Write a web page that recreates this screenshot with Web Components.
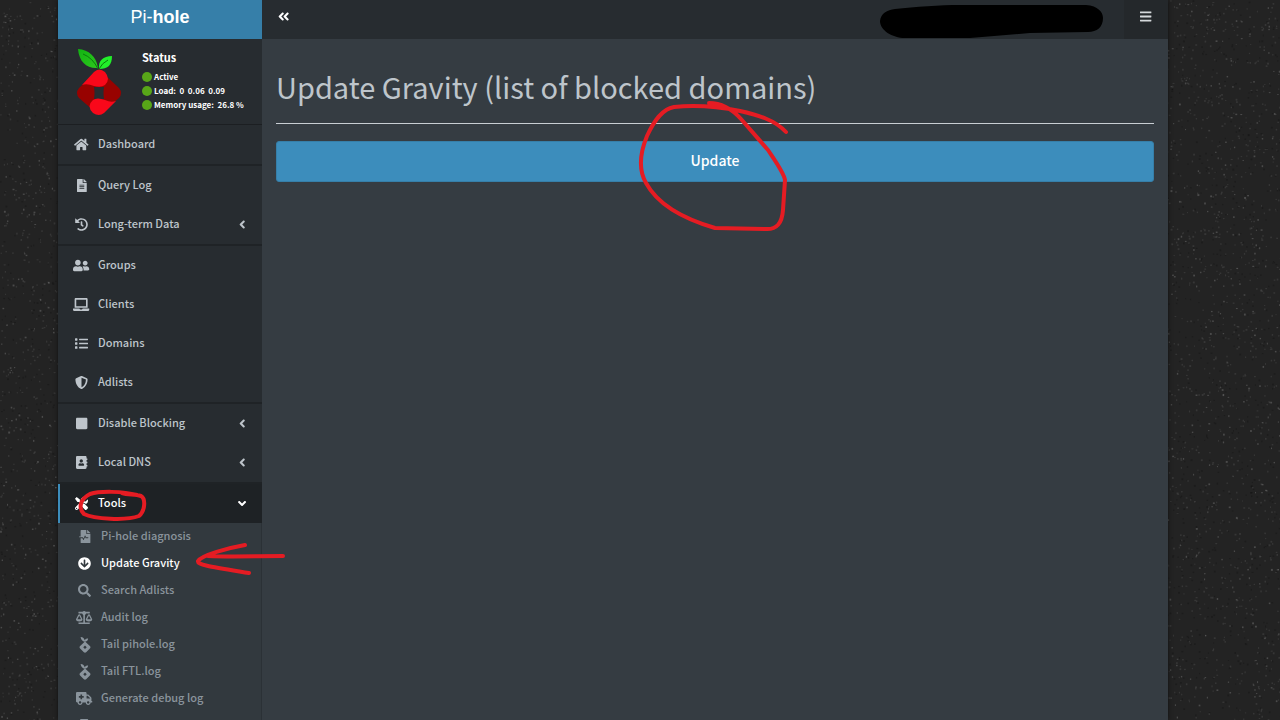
<!DOCTYPE html>
<html lang="en">
<head>
<meta charset="utf-8">
<title>Pi-hole - Update Gravity</title>
<style>
html { height: 100%; background: #232323; }
body { margin: 0; height: 100%; overflow: hidden; color: #bec5cb; font: 11px/20px "Noto Sans CJK SC", "Noto Sans", sans-serif; }
</style>
</head>
<body>
<pihole-app></pihole-app>
<script>
const ICONS = {
  home: [576, 'M280.37 148.26L96 300.11V464a16 16 0 0 0 16 16l112.06-.29a16 16 0 0 0 15.92-16V368a16 16 0 0 1 16-16h64a16 16 0 0 1 16 16v95.64a16 16 0 0 0 16 16.05L464 480a16 16 0 0 0 16-16V300L295.67 148.26a12.19 12.19 0 0 0-15.3 0zM571.6 251.47L488 182.56V44.05a12 12 0 0 0-12-12h-56a12 12 0 0 0-12 12v72.61L318.47 43a48 48 0 0 0-61 0L4.34 251.47a12 12 0 0 0-1.6 16.9l25.5 31A12 12 0 0 0 45.15 301l235.22-193.74a12.19 12.19 0 0 1 15.3 0L530.9 301a12 12 0 0 0 16.9-1.6l25.5-31a12 12 0 0 0-1.7-16.93z'],
  file: [384, 'M224 136V0H24C10.7 0 0 10.7 0 24v464c0 13.3 10.7 24 24 24h336c13.3 0 24-10.7 24-24V160H248c-13.2 0-24-10.8-24-24zm64 236c0 6.6-5.4 12-12 12H108c-6.6 0-12-5.4-12-12v-8c0-6.6 5.4-12 12-12h168c6.6 0 12 5.4 12 12v8zm0-64c0 6.6-5.4 12-12 12H108c-6.6 0-12-5.4-12-12v-8c0-6.6 5.4-12 12-12h168c6.6 0 12 5.4 12 12v8zm0-72v8c0 6.6-5.4 12-12 12H108c-6.6 0-12-5.4-12-12v-8c0-6.6 5.4-12 12-12h168c6.6 0 12 5.4 12 12zm96-114.1v6.1H256V0h6.1c6.4 0 12.5 2.5 17 7l97.9 98c4.5 4.5 7 10.6 7 16.9z'],
  history: [512, 'M504 255.531c.253 136.64-111.18 248.372-247.82 248.468-59.015.042-113.223-20.53-155.822-54.911-11.077-8.94-11.905-25.541-1.839-35.607l11.267-11.267c8.609-8.609 22.353-9.551 31.891-1.984C173.062 425.135 212.781 440 256 440c101.705 0 184-82.311 184-184 0-101.705-82.311-184-184-184-48.814 0-93.149 18.969-126.068 49.932l50.754 50.754c10.08 10.08 2.941 27.314-11.313 27.314H24c-8.837 0-16-7.163-16-16V38.627c0-14.254 17.234-21.393 27.314-11.314l49.372 49.372C129.209 34.136 189.552 8 256 8c136.81 0 247.747 110.78 248 247.531zm-180.912 78.784l9.823-12.63c8.138-10.463 6.253-25.542-4.21-33.679L288 256.349V152c0-13.255-10.745-24-24-24h-16c-13.255 0-24 10.745-24 24v135.651l65.409 50.874c10.463 8.137 25.541 6.253 33.679-4.21z'],
  friends: [640, 'M192 256c61.9 0 112-50.1 112-112S253.9 32 192 32 80 82.1 80 144s50.1 112 112 112zm76.8 32h-8.3c-20.8 10-43.9 16-68.5 16s-47.6-6-68.5-16h-8.3C51.6 288 0 339.6 0 403.2V432c0 26.5 21.5 48 48 48h288c26.5 0 48-21.5 48-48v-28.8c0-63.6-51.6-115.2-115.2-115.2zM480 256c53 0 96-43 96-96s-43-96-96-96-96 43-96 96 43 96 96 96zm48 32h-3.8c-13.9 4.8-28.6 8-44.2 8s-30.3-3.2-44.2-8H432c-20.4 0-39.2 5.9-55.7 15.4 24.4 26.3 39.7 61.2 39.7 99.8v38.4c0 2.2-.5 4.3-.6 6.4H592c26.5 0 48-21.5 48-48 0-61.9-50.1-112-112-112z'],
  laptop: [640, 'M624 416H381.54c-.74 19.81-14.71 32-32.74 32H288c-18.69 0-33.02-17.47-32.77-32H16c-8.8 0-16 7.2-16 16v16c0 35.2 28.8 64 64 64h512c35.2 0 64-28.8 64-64v-16c0-8.8-7.2-16-16-16zM576 48c0-26.4-21.6-48-48-48H112C85.6 0 64 21.6 64 48v336h512V48zm-64 272H128V64h384v256z'],
  list: [512, 'M80 368H16a16 16 0 0 0-16 16v64a16 16 0 0 0 16 16h64a16 16 0 0 0 16-16v-64a16 16 0 0 0-16-16zm0-320H16A16 16 0 0 0 0 64v64a16 16 0 0 0 16 16h64a16 16 0 0 0 16-16V64a16 16 0 0 0-16-16zm0 160H16a16 16 0 0 0-16 16v64a16 16 0 0 0 16 16h64a16 16 0 0 0 16-16v-64a16 16 0 0 0-16-16zm416 176H176a16 16 0 0 0-16 16v32a16 16 0 0 0 16 16h320a16 16 0 0 0 16-16v-32a16 16 0 0 0-16-16zm0-320H176a16 16 0 0 0-16 16v32a16 16 0 0 0 16 16h320a16 16 0 0 0 16-16V80a16 16 0 0 0-16-16zm0 160H176a16 16 0 0 0-16 16v32a16 16 0 0 0 16 16h320a16 16 0 0 0 16-16v-32a16 16 0 0 0-16-16z'],
  shield: [512, 'M466.5 83.7l-192-80a48.15 48.15 0 0 0-36.9 0l-192 80C27.7 91.1 16 108.6 16 128c0 198.5 114.5 335.7 221.5 380.3 11.8 4.9 25.1 4.9 36.9 0C360.1 472.6 496 349.3 496 128c0-19.4-11.7-36.9-29.5-44.3zM256.1 446.3l-.1-381 175.9 73.3c-3.3 151.4-82.1 261.1-175.8 307.7z'],
  stop: [448, 'M400 32H48C21.5 32 0 53.5 0 80v352c0 26.5 21.5 48 48 48h352c26.5 0 48-21.5 48-48V80c0-26.5-21.5-48-48-48z'],
  book: [448, 'M436 160c6.6 0 12-5.4 12-12v-40c0-6.6-5.4-12-12-12h-20V48c0-26.5-21.5-48-48-48H48C21.5 0 0 21.5 0 48v416c0 26.5 21.5 48 48 48h320c26.5 0 48-21.5 48-48v-48h20c6.6 0 12-5.4 12-12v-40c0-6.6-5.4-12-12-12h-20v-64h20c6.6 0 12-5.4 12-12v-40c0-6.6-5.4-12-12-12h-20v-64h20zm-228-32c35.3 0 64 28.7 64 64s-28.7 64-64 64-64-28.7-64-64 28.7-64 64-64zm112 236.8c0 10.6-10 19.2-22.4 19.2H118.4C106 384 96 375.4 96 364.8v-19.2c0-31.8 30.1-57.6 67.2-57.6h5c12.3 5.1 25.7 8 39.8 8s27.6-2.9 39.8-8h5c37.1 0 67.2 25.8 67.2 57.6v19.2z'],
  tools: [512, 'M501.1 395.7L384 278.6c-23.1-23.1-57.6-27.6-85.4-13.9L192 158.1V96L64 0 0 64l96 128h62.1l106.6 106.6c-13.6 27.8-9.2 62.3 13.9 85.4l117.1 117.1c14.6 14.6 38.2 14.6 52.7 0l52.7-52.7c14.5-14.6 14.5-38.2 0-52.7zM331.7 225c28.3 0 54.9 11 74.9 31l19.4 19.4c15.8-6.9 30.8-16.5 43.8-29.5 37.1-37.1 49.7-89.3 37.9-136.7-2.2-9-13.5-12.1-20.1-5.5l-74.4 74.4-67.9-11.3L334 98.9l74.4-74.4c6.6-6.6 3.4-17.9-5.7-20.2-47.4-11.7-99.6.9-136.6 37.9-28.5 28.5-41.9 66.1-41.2 103.6l82.1 82.1c8.1-1.9 16.5-2.9 24.7-2.9zm-103.9 82l-56.7-56.7L18.7 402.8c-25 25-25 65.5 0 90.5s65.5 25 90.5 0l123.6-123.6c-7.6-19.9-9.9-41.6-5-62.7zM64 472c-13.2 0-24-10.8-24-24 0-13.3 10.7-24 24-24s24 10.7 24 24c0 13.2-10.7 24-24 24z'],
  medical: [448, 'M288 136V0H88C74.7 0 64 10.7 64 24v232H8c-4.4 0-8 3.6-8 8v16c0 4.4 3.6 8 8 8h140.9c3 0 5.8 1.7 7.2 4.4l19.9 39.8 56.8-113.7c2.9-5.9 11.4-5.9 14.3 0l34.7 69.5H352c8.8 0 16 7.2 16 16s-7.2 16-16 16h-89.9L240 275.8l-56.8 113.7c-2.9 5.9-11.4 5.9-14.3 0L134.1 320H64v168c0 13.3 10.7 24 24 24h336c13.3 0 24-10.7 24-24V160H312c-13.2 0-24-10.8-24-24zm153-31L343.1 7c-4.5-4.5-10.6-7-17-7H320v128h128v-6.1c0-6.3-2.5-12.4-7-16.9z'],
  down: [512, 'M504 256c0 137-111 248-248 248S8 393 8 256 119 8 256 8s248 111 248 248zm-143.6-28.9L288 302.6V120c0-13.3-10.7-24-24-24h-16c-13.3 0-24 10.7-24 24v182.6l-72.4-75.5c-9.3-9.7-24.8-9.9-34.3-.4l-10.9 11c-9.4 9.4-9.4 24.6 0 33.9L239 404.3c9.4 9.4 24.6 9.4 33.9 0l132.7-132.7c9.4-9.4 9.4-24.6 0-33.9l-10.9-11c-9.5-9.5-25-9.3-34.3.4z'],
  search: [512, 'M505 442.7L405.3 343c-4.5-4.5-10.6-7-17-7H372c27.6-35.3 44-79.7 44-128C416 93.1 322.9 0 208 0S0 93.1 0 208s93.1 208 208 208c48.3 0 92.7-16.4 128-44v16.3c0 6.4 2.5 12.5 7 17l99.7 99.7c9.4 9.4 24.6 9.4 33.9 0l28.3-28.3c9.4-9.4 9.4-24.6.1-34zM208 336c-70.7 0-128-57.2-128-128 0-70.7 57.2-128 128-128 70.7 0 128 57.2 128 128 0 70.7-57.2 128-128 128z'],
  scale: [640, 'M256 336h-.02c0-16.18 1.34-8.73-85.05-181.51-17.65-35.29-68.19-35.36-85.87 0C-2.06 328.75.02 320.33.02 336H0c0 44.18 57.31 80 128 80s128-35.82 128-80zM128 176l72 144H56l72-144zm511.98 160c0-16.18 1.34-8.73-85.05-181.51-17.65-35.29-68.19-35.36-85.87 0-87.12 174.26-85.04 165.84-85.04 181.51H384c0 44.18 57.31 80 128 80s128-35.82 128-80h-.02zM440 320l72-144 72 144H440zm88 128H352V153.25c23.51-10.29 41.16-31.48 46.39-57.25H528c8.84 0 16-7.16 16-16V48c0-8.84-7.16-16-16-16H383.64C369.04 12.68 346.09 0 320 0s-49.04 12.68-63.64 32H112c-8.84 0-16 7.16-16 16v32c0 8.84 7.16 16 16 16h129.61c5.23 25.76 22.87 46.96 46.39 57.25V448H112c-8.84 0-16 7.16-16 16v32c0 8.84 7.16 16 16 16h416c8.84 0 16-7.16 16-16v-32c0-8.84-7.16-16-16-16z'],
  pihole: [384, 'M176 150C116 146 66 90 50 0c80 4 124 56 132 104C200 70 236 50 292 50c-4 56-40 96-88 100zM228 172l120 116c24 24 24 56 0 80L228 490c-20 20-52 20-72 0L36 368c-24-24-24-56 0-80l120-116c20-18 52-18 72 0zM192 272L136 328 192 384 248 328z'],
  ambulance: [640, 'M624 352h-16V243.9c0-12.7-5.1-24.9-14.1-33.9L494 110.1c-9-9-21.2-14.1-33.9-14.1H416V48c0-26.5-21.5-48-48-48H48C21.5 0 0 21.5 0 48v320c0 26.5 21.5 48 48 48h16c0 53 43 96 96 96s96-43 96-96h128c0 53 43 96 96 96s96-43 96-96h48c8.8 0 16-7.2 16-16v-32c0-8.8-7.2-16-16-16zM160 464c-26.5 0-48-21.5-48-48s21.5-48 48-48 48 21.5 48 48-21.5 48-48 48zm144-248c0 4.4-3.6 8-8 8h-56v56c0 4.4-3.6 8-8 8h-48c-4.4 0-8-3.6-8-8v-56h-56c-4.4 0-8-3.6-8-8v-48c0-4.4 3.6-8 8-8h56v-56c0-4.4 3.6-8 8-8h48c4.4 0 8 3.6 8 8v56h56c4.4 0 8 3.6 8 8v48zm176 248c-26.5 0-48-21.5-48-48s21.5-48 48-48 48 21.5 48 48-21.5 48-48 48zm80-208H416V144h44.1l99.9 99.9V256z'],
  network: [640, 'M192 0h256c18 0 32 14 32 32v128c0 18-14 32-32 32h-96v40h288v48H544v40h64c18 0 32 14 32 32v128c0 18-14 32-32 32H416c-18 0-32-14-32-32V352c0-18 14-32 32-32h64v-40H160v40h64c18 0 32 14 32 32v128c0 18-14 32-32 32H32c-18 0-32-14-32-32V352c0-18 14-32 32-32h64v-40H0v-48h288v-40h-96c-18 0-32-14-32-32V32c0-18 14-32 32-32z'],
  left: [256, 'M31.7 239l136-136c9.4-9.4 24.6-9.4 33.9 0l22.6 22.6c9.4 9.4 9.4 24.6 0 33.9L127.9 256l96.4 96.4c9.4 9.4 9.4 24.6 0 33.9L201.7 409c-9.4 9.4-24.6 9.4-33.9 0l-136-136c-9.5-9.4-9.5-24.6-.1-34z'],
  open: [320, 'M143 352.3L7 216.3c-9.4-9.4-9.4-24.6 0-33.9l22.6-22.6c9.4-9.4 24.6-9.4 33.9 0l96.4 96.4 96.4-96.4c9.4-9.4 24.6-9.4 33.9 0l22.6 22.6c9.4 9.4 9.4 24.6 0 33.9l-136 136c-9.2 9.4-24.4 9.4-33.8 0z'],
  collapse: [448, 'M223.7 239l136-136c9.4-9.4 24.6-9.4 33.9 0l22.6 22.6c9.4 9.4 9.4 24.6 0 33.9L319.9 256l96.4 96.4c9.4 9.4 9.4 24.6 0 33.9L393.7 409c-9.4 9.4-24.6 9.4-33.9 0l-136-136c-9.5-9.4-9.5-24.6-.1-34zm-192 34l136 136c9.4 9.4 24.6 9.4 33.9 0l22.6-22.6c9.4-9.4 9.4-24.6 0-33.9L127.9 256l96.4-96.4c9.4-9.4 9.4-24.6 0-33.9L201.7 103c-9.4-9.4-24.6-9.4-33.9 0l-136 136c-9.5 9.4-9.5 24.6-.1 34z'],
  bars: [448, 'M16 132h416c8.8 0 16-7.2 16-16V76c0-8.8-7.2-16-16-16H16C7.2 60 0 67.2 0 76v40c0 8.8 7.2 16 16 16zm0 160h416c8.8 0 16-7.2 16-16v-40c0-8.8-7.2-16-16-16H16c-8.8 0-16 7.2-16 16v40c0 8.8 7.2 16 16 16zm0 160h416c8.8 0 16-7.2 16-16v-40c0-8.8-7.2-16-16-16H16c-8.8 0-16 7.2-16 16v40c0 8.8 7.2 16 16 16z']
};

class View extends HTMLElement {
  connectedCallback() {
    if (this.shadowRoot) return;
    this.attachShadow({ mode: 'open' }).innerHTML = this.view();
    this.ready();
  }
  ready() {}
}

customElements.define('ph-icon', class extends View {
  view() {
    const [w, d] = ICONS[this.getAttribute('name')];
    return `<style>:host{display:block;height:13px;flex:none}:host([name=pihole]){height:16px}svg{display:block;height:100%;margin:auto;fill:currentColor;overflow:visible}</style>
    <svg viewBox="0 0 ${w} 512" aria-hidden="true"><path fill-rule="evenodd" d="${d}"/></svg>`;
  }
});

customElements.define('ph-backdrop', class extends View {
  view() {
    return `<style>:host{position:fixed;inset:0;z-index:-1;display:block;background:#232323}canvas{display:block;width:100%;height:100%}</style><canvas></canvas>`;
  }
  ready() {
    // Asphalt-like grain: dim speckles from a seeded generator.
    const c = this.shadowRoot.querySelector('canvas');
    c.width = innerWidth; c.height = innerHeight;
    const g = c.getContext('2d');
    let s = 7;
    const r = () => (s = (s * 16807) % 2147483647) / 2147483647;
    const n = c.width * c.height / 45;
    for (let i = 0; i < n; i++) {
      const k = r();
      g.fillStyle = k < .3 ? 'rgba(0,0,0,.2)' : `rgba(200,200,200,${k > .85 ? .24 : .12})`;
      g.fillRect(r() * c.width, r() * c.height, 1 + r(), 1 + r());
    }
  }
});

customElements.define('ph-logo', class extends View {
  view() {
    return `<style>:host{display:block;width:48px;height:68px}svg{display:block;width:100%;height:100%}</style>
    <svg viewBox="0 0 48 68" role="img" aria-label="Pi-hole logo">
      <defs><linearGradient id="a" x2="1" y2="1"><stop stop-color="#12b212"/><stop offset="1" stop-color="#2dc91d"/></linearGradient></defs>
      <path fill="url(#a)" d="M2 1C13 2 20 8 22 20 11 21 3 14 2 1z"/>
      <path fill="#22f02a" d="M36 8C36 17 32 21 23 21 22 13 27 8 36 8z"/>
      <path stroke="#087d0b" fill="none" d="M7 6Q17 10 22 21M32 12Q26 15 23 21"/>
      <path fill="#980200" fill-rule="evenodd" d="M19 25L3 40Q-1 45 3 50L18 63H28L43 50Q47 45 43 40L27 25zM18 39Q19 45 18 51H28Q27 45 28 39z"/>
      <path fill="#f9081a" d="M6 37L18 24Q23 19 29 24 35 31 29 37 25 40 18 38 11 35 6 37zM40 53L28 65Q23 69 17 65 10 58 17 52 21 49 29 52 35 55 40 53z"/>
    </svg>`;
  }
});

customElements.define('ph-status', class extends View {
  view() {
    return `<style>
      :host{display:flex;box-sizing:border-box;height:86px;padding:9px 0 0 18px;gap:18px;color:#fff;font-weight:700;font-size:8px;line-height:14px;border-bottom:1px solid #1c1f22}
      h2{margin:0 0 3px;font-size:11px;line-height:19px}
      p{margin:0;display:flex;align-items:center;gap:2px;white-space:pre}
      i{width:10px;height:10px;border-radius:50%;background:#58a618}
    </style>
    <ph-logo></ph-logo>
    <div><h2>Status</h2><p><i></i>Active</p><p><i></i>Load:  0  0.06  0.09</p><p><i></i>Memory usage:  26.8 %</p></div>`;
  }
});

customElements.define('ph-item', class extends View {
  view() {
    const arrow = this.getAttribute('arrow');
    const label = this.getAttribute('label');
    return `<style>
      :host{display:block;color:#bec5cb;font-weight:500}
      :host([group]){border-top:2px solid #1f2326}
      :host([active]){background:#1e2225;color:#fff;box-shadow:inset 2px 0 #3c8dbc}
      a{display:flex;align-items:center;box-sizing:border-box;height:39px;padding:0 16px 0 14px;gap:7px;color:inherit;text-decoration:none}
      .icon{width:19px}
      .label{padding-bottom:3px}
      .arrow{width:8px;margin-left:auto}
      :host([sub]){color:#8a949c}
      :host([sub][active]){background:none;box-shadow:none;color:#fff}
      :host([sub]) a{height:27px;padding-left:17px}
    </style>
    <a href="#"${label ? ` aria-label="${label}"` : ''}><ph-icon class="icon" name="${this.getAttribute('icon')}"></ph-icon><span class="label"><slot></slot></span>${arrow ? `<ph-icon class="arrow" name="${arrow}"></ph-icon>` : ''}</a>`;
  }
});

customElements.define('ph-sidebar', class extends View {
  view() {
    return `<style>
      :host{display:block;background:#272c30;overflow:hidden}
      .sub{box-sizing:border-box;background:#32393e;border-right:1px solid #2b3136}
    </style>
    <ph-status></ph-status>
    <nav aria-label="Main">
      <ph-item icon="home">Dashboard</ph-item>
      <ph-item group icon="file">Query Log</ph-item>
      <ph-item icon="history" arrow="left">Long-term Data</ph-item>
      <ph-item group icon="friends">Groups</ph-item>
      <ph-item icon="laptop">Clients</ph-item>
      <ph-item icon="list">Domains</ph-item>
      <ph-item icon="shield">Adlists</ph-item>
      <ph-item group icon="stop" arrow="left">Disable Blocking</ph-item>
      <ph-item icon="book" arrow="left">Local DNS</ph-item>
      <ph-item group active icon="tools" arrow="open">Tools</ph-item>
      <div class="sub">
        <ph-item sub icon="medical">Pi-hole diagnosis</ph-item>
        <ph-item sub active icon="down">Update Gravity</ph-item>
        <ph-item sub icon="search">Search Adlists</ph-item>
        <ph-item sub icon="scale">Audit log</ph-item>
        <ph-item sub icon="pihole">Tail pihole.log</ph-item>
        <ph-item sub icon="pihole">Tail FTL.log</ph-item>
        <ph-item sub icon="ambulance">Generate debug log</ph-item>
        <ph-item sub icon="network" label="Network"></ph-item>
      </div>
    </nav>`;
  }
});

customElements.define('ph-topbar', class extends View {
  view() {
    return `<style>
      :host{display:flex;justify-content:space-between;height:39px;background:#272c30}
      button{border:0;padding:0 0 6px;width:44px;background:none;color:#fff;cursor:pointer}
      .menu{background:#24282b;color:#d5d9dc}
    </style>
    <button aria-label="Toggle sidebar"><ph-icon name="collapse"></ph-icon></button>
    <button class="menu" aria-label="Menu"><ph-icon name="bars"></ph-icon></button>`;
  }
});

customElements.define('ph-gravity', class extends View {
  view() {
    return `<style>
      :host{display:block;padding:23px 14px;background:#353c42}
      h1{margin:0 0 17px;padding-bottom:12px;border-bottom:1px solid #c8ced3;font-size:29px;line-height:49px;font-weight:400}
      button{display:block;width:100%;height:41px;padding:0 0 3px;border:1px solid #367fa9;border-radius:3px;background:#3c8dbc;color:#fff;font:500 14px/20px "Noto Sans CJK SC","Noto Sans",sans-serif;cursor:pointer}
    </style>
    <h1>Update Gravity (list of blocked domains)</h1>
    <button>Update</button>`;
  }
});

customElements.define('ph-markup', class extends View {
  view() {
    return `<style>:host{position:absolute;top:0;left:0;pointer-events:none}svg{display:block}</style>
    <svg width="1280" height="720" fill="none" stroke="#e51c23" stroke-width="4" stroke-linecap="round" stroke-linejoin="round" aria-hidden="true">
      <path fill="#000" stroke="none" d="M895 9C915 7 940 5 960 5H1086C1098 6 1103 12 1103 18 1103 27 1097 32 1088 32L1030 33 970 38H905C892 38 880 30 880 21 881 13 887 10 895 9z"/>
      <path d="M786 132C775 120 758 115 740 111 720 107 695 105 674 107 662 109 654 121 647 136 640 153 638 169 646 183 658 205 684 219 715 228L765 229C777 230 782 223 783 210L785 180C784 173 776 162 768 150L741 119C732 109 721 103 709 103"/>
      <path d="M137 495C123 491 99 491 90 494 80 499 78 508 84 514 94 519 126 521 139 516 145 511 146 499 141 496 135 494 128 495 122 493"/>
      <path d="M245 545C228 548 202 555 198 561 197 565 212 567 249 573M283 556C258 556 232 557 208 556"/>
    </svg>`;
  }
});

customElements.define('pihole-app', class extends View {
  view() {
    return `<style>
      :host{display:block;height:100%}
      .window{display:grid;grid-template:39px 1fr / 204px 1fr;height:100%;margin:0 112px 0 58px;box-shadow:0 0 4px #111}
      .brand{display:flex;justify-content:center;padding-top:6px;background:#367fa9;color:#fff;text-decoration:none;font:18px/22px "Liberation Sans",sans-serif}
      ph-sidebar,ph-gravity{min-height:0}
    </style>
    <ph-backdrop></ph-backdrop>
    <div class="window">
      <a class="brand" href="#">Pi-<b>hole</b></a>
      <ph-topbar></ph-topbar>
      <ph-sidebar></ph-sidebar>
      <ph-gravity></ph-gravity>
    </div>
    <ph-markup></ph-markup>`;
  }
});
</script>
</body>
</html>
